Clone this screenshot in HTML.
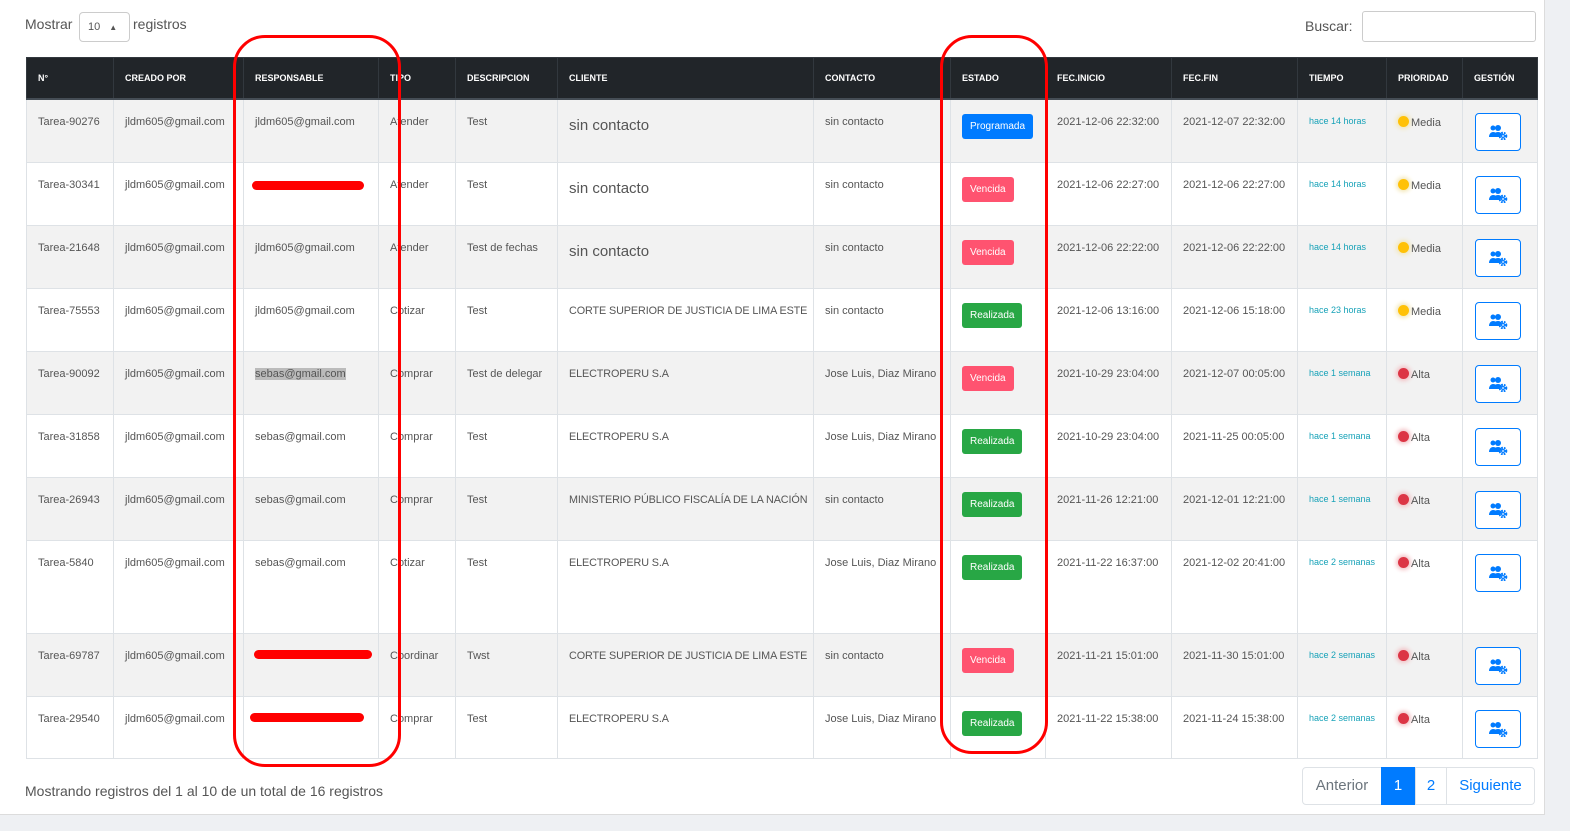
<!DOCTYPE html>
<html><head><meta charset="utf-8"><style>
*{box-sizing:border-box;margin:0;padding:0}
body{width:1570px;height:831px;background:#eef0f3;font-family:"Liberation Sans",sans-serif;color:#495057;position:relative;overflow:hidden}
.card{position:absolute;left:0;top:0;width:1545px;height:815px;background:#fff;border-right:1px solid #dcdcdc;border-bottom:1px solid #dcdcdc}
.top{position:absolute;font-size:14px;color:#555}
table{position:absolute;left:26px;top:57px;border-collapse:collapse;table-layout:fixed;width:1510px;font-size:11px}
th{background:#212529;color:#fff;font-size:9px;font-weight:bold;text-align:left;padding:0 11px;height:41px;border:1px solid #32383e;border-bottom:2px solid #454d55}
td{border:1px solid #dee2e6;vertical-align:top;padding:16px 11px 0;color:#555;white-space:nowrap;overflow:hidden}
tr:nth-child(even) td{background:#f2f2f2}
td.c{letter-spacing:-0.1px;font-size:10.8px}
.big{font-size:15px;padding-top:17px}
.b{display:inline-block;color:#fff;font-size:10px;padding:7px 8px;border-radius:3px;margin-top:-2px}
.pr{background:#007bff}.ve{background:#ff5370;}.re{background:#28a745}
.t{color:#17a2b8;font-size:9px}
.dot{display:inline-block;width:11px;height:11px;border-radius:50%;vertical-align:-1px;margin-right:2px}
.y{background:#ffc107;box-shadow:0 0 4px 2px #f3e7b8}.r{background:#dc3545;box-shadow:0 0 4px 2px #f3c0c4}
.g{display:block;width:46px;height:38px;border:1px solid #007bff;border-radius:4px;margin:-3px 0 0 1px;background:#fff;text-align:center;padding-top:10px}
.pg{position:absolute;top:767px;height:38px;font-size:15px;line-height:36px;text-align:center;border:1px solid #dee2e6}
.red{position:absolute;border:3px solid #f00;border-radius:32px}
.scr{position:absolute;height:9px;background:#f00;border-radius:6px}
</style></head><body>
<div class="card"></div>
<div class="top" style="left:25px;top:16px">Mostrar</div>
<div style="position:absolute;left:79px;top:12px;width:51px;height:30px;border:1px solid #ccc;border-radius:4px;font-size:11px;padding:8px 0 0 8px;color:#555">10 <span style="font-size:8px;margin-left:6px">&#9650;&#xFE0E;</span></div>
<div class="top" style="left:133px;top:16px">registros</div>
<div class="top" style="left:1305px;top:18px">Buscar:</div>
<div style="position:absolute;left:1362px;top:11px;width:174px;height:31px;border:1px solid #ccc;border-radius:3px"></div>
<table>
<colgroup><col style="width:87px"><col style="width:130px"><col style="width:135px"><col style="width:77px"><col style="width:102px"><col style="width:256px"><col style="width:137px"><col style="width:95px"><col style="width:126px"><col style="width:126px"><col style="width:89px"><col style="width:76px"><col style="width:75px"></colgroup>
<tr><th>N°</th><th>CREADO POR</th><th>RESPONSABLE</th><th>TIPO</th><th>DESCRIPCION</th><th>CLIENTE</th><th>CONTACTO</th><th>ESTADO</th><th>FEC.INICIO</th><th>FEC.FIN</th><th>TIEMPO</th><th>PRIORIDAD</th><th>GESTIÓN</th></tr>
<tr style="height:64px"><td>Tarea-90276</td><td>jldm605@gmail.com</td><td>jldm605@gmail.com</td><td>Atender</td><td>Test</td><td class="big">sin contacto</td><td>sin contacto</td><td><span class="b pr">Programada</span></td><td>2021-12-06 22:32:00</td><td>2021-12-07 22:32:00</td><td class="t">hace 14 horas</td><td><span class="dot y"></span>Media</td><td><span class="g">G</span></td></tr>
<tr style="height:63px"><td>Tarea-30341</td><td>jldm605@gmail.com</td><td></td><td>Atender</td><td>Test</td><td class="big">sin contacto</td><td>sin contacto</td><td><span class="b ve">Vencida</span></td><td>2021-12-06 22:27:00</td><td>2021-12-06 22:27:00</td><td class="t">hace 14 horas</td><td><span class="dot y"></span>Media</td><td><span class="g">G</span></td></tr>
<tr style="height:63px"><td>Tarea-21648</td><td>jldm605@gmail.com</td><td>jldm605@gmail.com</td><td>Atender</td><td>Test de fechas</td><td class="big">sin contacto</td><td>sin contacto</td><td><span class="b ve">Vencida</span></td><td>2021-12-06 22:22:00</td><td>2021-12-06 22:22:00</td><td class="t">hace 14 horas</td><td><span class="dot y"></span>Media</td><td><span class="g">G</span></td></tr>
<tr style="height:63px"><td>Tarea-75553</td><td>jldm605@gmail.com</td><td>jldm605@gmail.com</td><td>Cotizar</td><td>Test</td><td class="c">CORTE SUPERIOR DE JUSTICIA DE LIMA ESTE</td><td>sin contacto</td><td><span class="b re">Realizada</span></td><td>2021-12-06 13:16:00</td><td>2021-12-06 15:18:00</td><td class="t">hace 23 horas</td><td><span class="dot y"></span>Media</td><td><span class="g">G</span></td></tr>
<tr style="height:63px"><td>Tarea-90092</td><td>jldm605@gmail.com</td><td><span style="background:#bbb">sebas@gmail.com</span></td><td>Comprar</td><td>Test de delegar</td><td class="c">ELECTROPERU S.A</td><td>Jose Luis, Diaz Mirano</td><td><span class="b ve">Vencida</span></td><td>2021-10-29 23:04:00</td><td>2021-12-07 00:05:00</td><td class="t">hace 1 semana</td><td><span class="dot r"></span>Alta</td><td><span class="g">G</span></td></tr>
<tr style="height:63px"><td>Tarea-31858</td><td>jldm605@gmail.com</td><td>sebas@gmail.com</td><td>Comprar</td><td>Test</td><td class="c">ELECTROPERU S.A</td><td>Jose Luis, Diaz Mirano</td><td><span class="b re">Realizada</span></td><td>2021-10-29 23:04:00</td><td>2021-11-25 00:05:00</td><td class="t">hace 1 semana</td><td><span class="dot r"></span>Alta</td><td><span class="g">G</span></td></tr>
<tr style="height:63px"><td>Tarea-26943</td><td>jldm605@gmail.com</td><td>sebas@gmail.com</td><td>Comprar</td><td>Test</td><td class="c">MINISTERIO PÚBLICO FISCALÍA DE LA NACIÓN</td><td>sin contacto</td><td><span class="b re">Realizada</span></td><td>2021-11-26 12:21:00</td><td>2021-12-01 12:21:00</td><td class="t">hace 1 semana</td><td><span class="dot r"></span>Alta</td><td><span class="g">G</span></td></tr>
<tr style="height:93px"><td>Tarea-5840</td><td>jldm605@gmail.com</td><td>sebas@gmail.com</td><td>Cotizar</td><td>Test</td><td class="c">ELECTROPERU S.A</td><td>Jose Luis, Diaz Mirano</td><td><span class="b re">Realizada</span></td><td>2021-11-22 16:37:00</td><td>2021-12-02 20:41:00</td><td class="t">hace 2 semanas</td><td><span class="dot r"></span>Alta</td><td><span class="g">G</span></td></tr>
<tr style="height:63px"><td>Tarea-69787</td><td>jldm605@gmail.com</td><td></td><td>Coordinar</td><td>Twst</td><td class="c">CORTE SUPERIOR DE JUSTICIA DE LIMA ESTE</td><td>sin contacto</td><td><span class="b ve">Vencida</span></td><td>2021-11-21 15:01:00</td><td>2021-11-30 15:01:00</td><td class="t">hace 2 semanas</td><td><span class="dot r"></span>Alta</td><td><span class="g">G</span></td></tr>
<tr style="height:62px"><td>Tarea-29540</td><td>jldm605@gmail.com</td><td></td><td>Comprar</td><td>Test</td><td class="c">ELECTROPERU S.A</td><td>Jose Luis, Diaz Mirano</td><td><span class="b re">Realizada</span></td><td>2021-11-22 15:38:00</td><td>2021-11-24 15:38:00</td><td class="t">hace 2 semanas</td><td><span class="dot r"></span>Alta</td><td><span class="g">G</span></td></tr>
</table>
<div class="top" style="left:25px;top:783px">Mostrando registros del 1 al 10 de un total de 16 registros</div>
<div class="pg" style="left:1302px;width:80px;color:#6c757d;border-radius:4px 0 0 4px">Anterior</div>
<div class="pg" style="left:1381px;width:34px;background:#007bff;border-color:#007bff;color:#fff">1</div>
<div class="pg" style="left:1415px;width:32px;color:#007bff">2</div>
<div class="pg" style="left:1446px;width:89px;color:#007bff;border-radius:0 4px 4px 0">Siguiente</div>
<div class="red" style="left:233px;top:35px;width:168px;height:732px"></div>
<div class="red" style="left:940px;top:35px;width:108px;height:719px"></div>
<div class="scr" style="left:252px;top:181px;width:112px"></div>
<div class="scr" style="left:254px;top:650px;width:118px"></div>
<div class="scr" style="left:250px;top:713px;width:114px"></div>
<script>
document.querySelectorAll('.g').forEach(function(e){e.innerHTML='<svg width="20" height="16" viewBox="0 0 20 16"><circle cx="5" cy="4" r="2.5" fill="#007bff"/><circle cx="10" cy="4" r="3" fill="#007bff"/><path d="M1 13c0-3 2-5 4-5s3 1 3 1v4z M5 13c0-3 2-5 5-5 2 0 3 1 4 2l-2 3z" fill="#007bff"/><circle cx="15" cy="12" r="3.2" fill="none" stroke="#007bff" stroke-width="2.2" stroke-dasharray="1.6 1"/><circle cx="15" cy="12" r="2" fill="#007bff"/><circle cx="15" cy="12" r=".9" fill="#fff"/></svg>';});
</script>
</body></html>
